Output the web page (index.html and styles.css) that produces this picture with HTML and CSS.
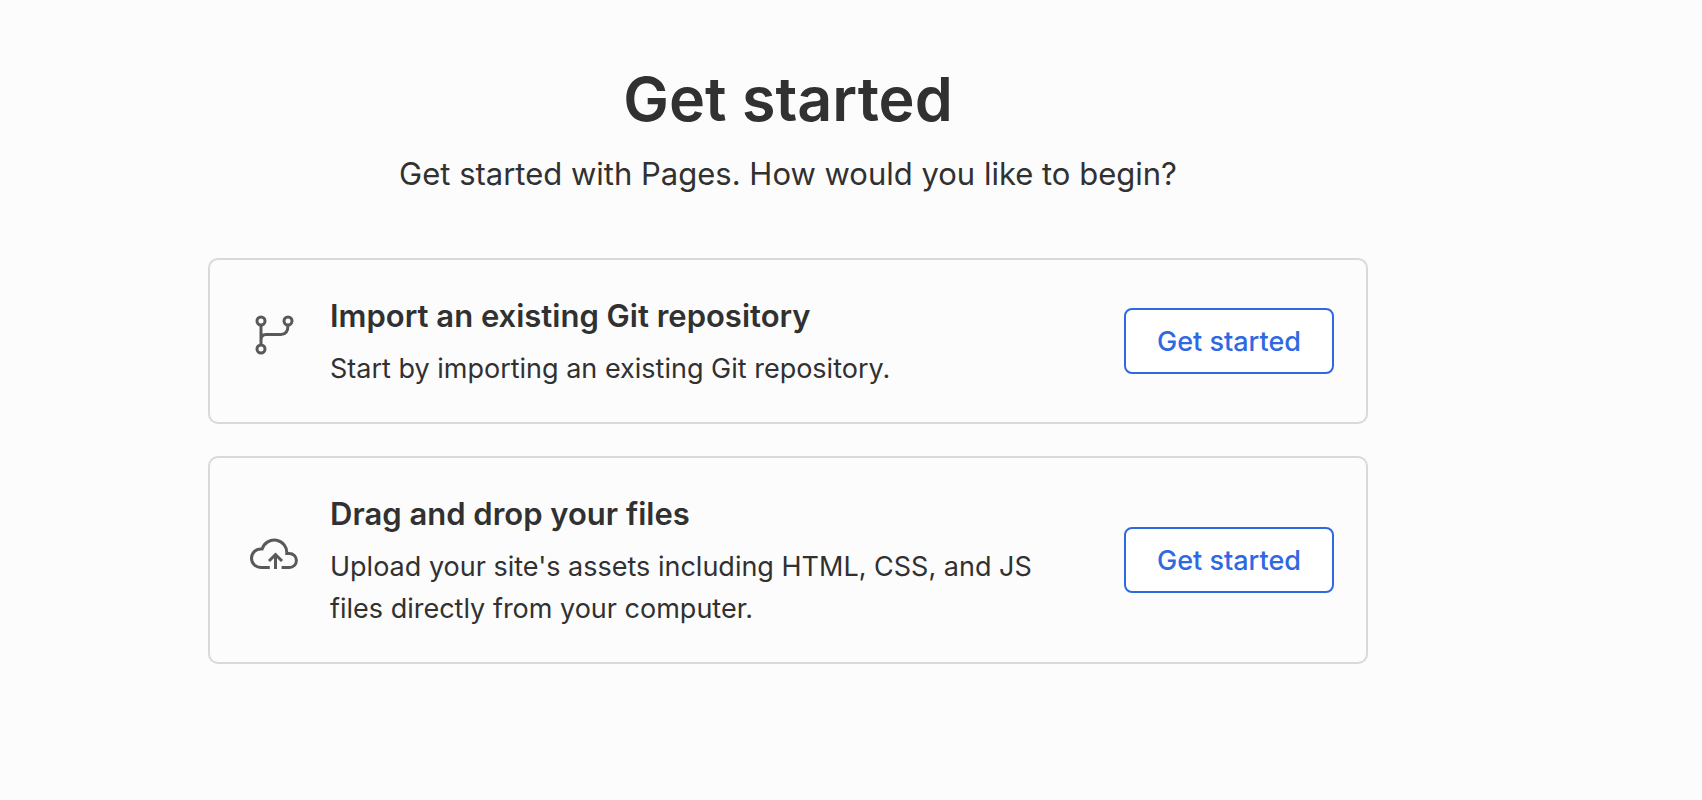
FILE: index.html
```html
<!DOCTYPE html>
<html lang="en">
<head>
    <meta charset="UTF-8">
    <meta name="viewport" content="width=device-width, initial-scale=1.0">
    <title>Get started</title>
    <link rel="stylesheet" href="styles.css">
</head>
<body>
    <main class="container">
        <!-- Page heading -->
        <header class="page-header">
            <h1 class="title">Get started</h1>
            <p class="subtitle">Get started with Pages. How would you like to begin?</p>
        </header>

        <!-- Ways to create a project -->
        <div class="card-list">
            <section class="card">
                <div class="card-icon">
                    <svg width="48" height="48" viewBox="0 0 48 48" aria-hidden="true">
                        <circle cx="11" cy="10" r="4"/>
                        <circle cx="38" cy="10" r="4"/>
                        <circle cx="11" cy="38" r="4"/>
                        <path d="M11 14v20M11 29c0-4 2-5.500 5-5.500h15c4.500 0 7-3 7-9.500"/>
                    </svg>
                </div>
                <div class="card-body">
                    <h2 class="card-title">Import an existing Git repository</h2>
                    <p class="card-text">Start by importing an existing Git repository.</p>
                </div>
                <button type="button" class="card-button">Get started</button>
            </section>

            <section class="card">
                <div class="card-icon">
                    <svg width="48" height="48" viewBox="0 0 48 48" aria-hidden="true">
                        <path d="M19.800 37.500h-9a9.300 9.300 0 0 1 0-18.600h1.400a12.600 12.600 0 0 1 24.600 4.600h2.600a7 7 0 0 1 0 14h-7.800"/>
                        <path d="M25.500 39V25M19 31l6.500-6.500L32 31"/>
                    </svg>
                </div>
                <div class="card-body">
                    <h2 class="card-title">Drag and drop your files</h2>
                    <p class="card-text">Upload your site's assets including HTML, CSS, and JS files directly from your computer.</p>
                </div>
                <button type="button" class="card-button">Get started</button>
            </section>
        </div>
    </main>
</body>
</html>
```
FILE: styles.css
```css
* {
    box-sizing: border-box;
}

body {
    margin: 0;
    padding: 60px 126px 60px 0;
    font-family: Inter, "Liberation Sans", sans-serif;
    color: #313131;
    background-color: #fcfcfc;
}

.container {
    max-width: 1160px;
    margin: 0 auto;
}

/* Page heading */
.page-header {
    margin-bottom: 60px;
    text-align: center;
}

.title {
    margin: 0 0 12px;
    font-size: 61px;
    line-height: 78px;
    font-weight: 600;
}

.subtitle {
    margin: 0;
    font-size: 31px;
    line-height: 48px;
}

/* Option cards */
.card-list {
    display: flex;
    flex-direction: column;
    gap: 32px;
}

.card {
    display: flex;
    align-items: center;
    gap: 24px;
    padding: 32px;
    border: 2px solid #d9d9d9;
    border-radius: 10px;
}

.card-icon {
    flex: none;
    width: 64px;
    padding-bottom: 12px;
}

.card-icon svg {
    display: block;
    margin: 0 auto;
    fill: none;
    stroke: #595959;
    stroke-width: 3;
}

.card-body {
    flex: 1;
}

.card-title {
    margin: 0 0 8px;
    font-size: 31px;
    line-height: 48px;
    font-weight: 600;
}

.card-text {
    margin: 0;
    font-size: 27px;
    line-height: 42px;
}

.card-button {
    flex: none;
    min-width: 210px;
    height: 66px;
    margin-left: 32px;
    padding: 0 24px;
    font-family: inherit;
    font-size: 27px;
    font-weight: 500;
    color: #2f69e2;
    background-color: #fff;
    border: 2px solid #2f69e2;
    border-radius: 8px;
    cursor: pointer;
}
```
